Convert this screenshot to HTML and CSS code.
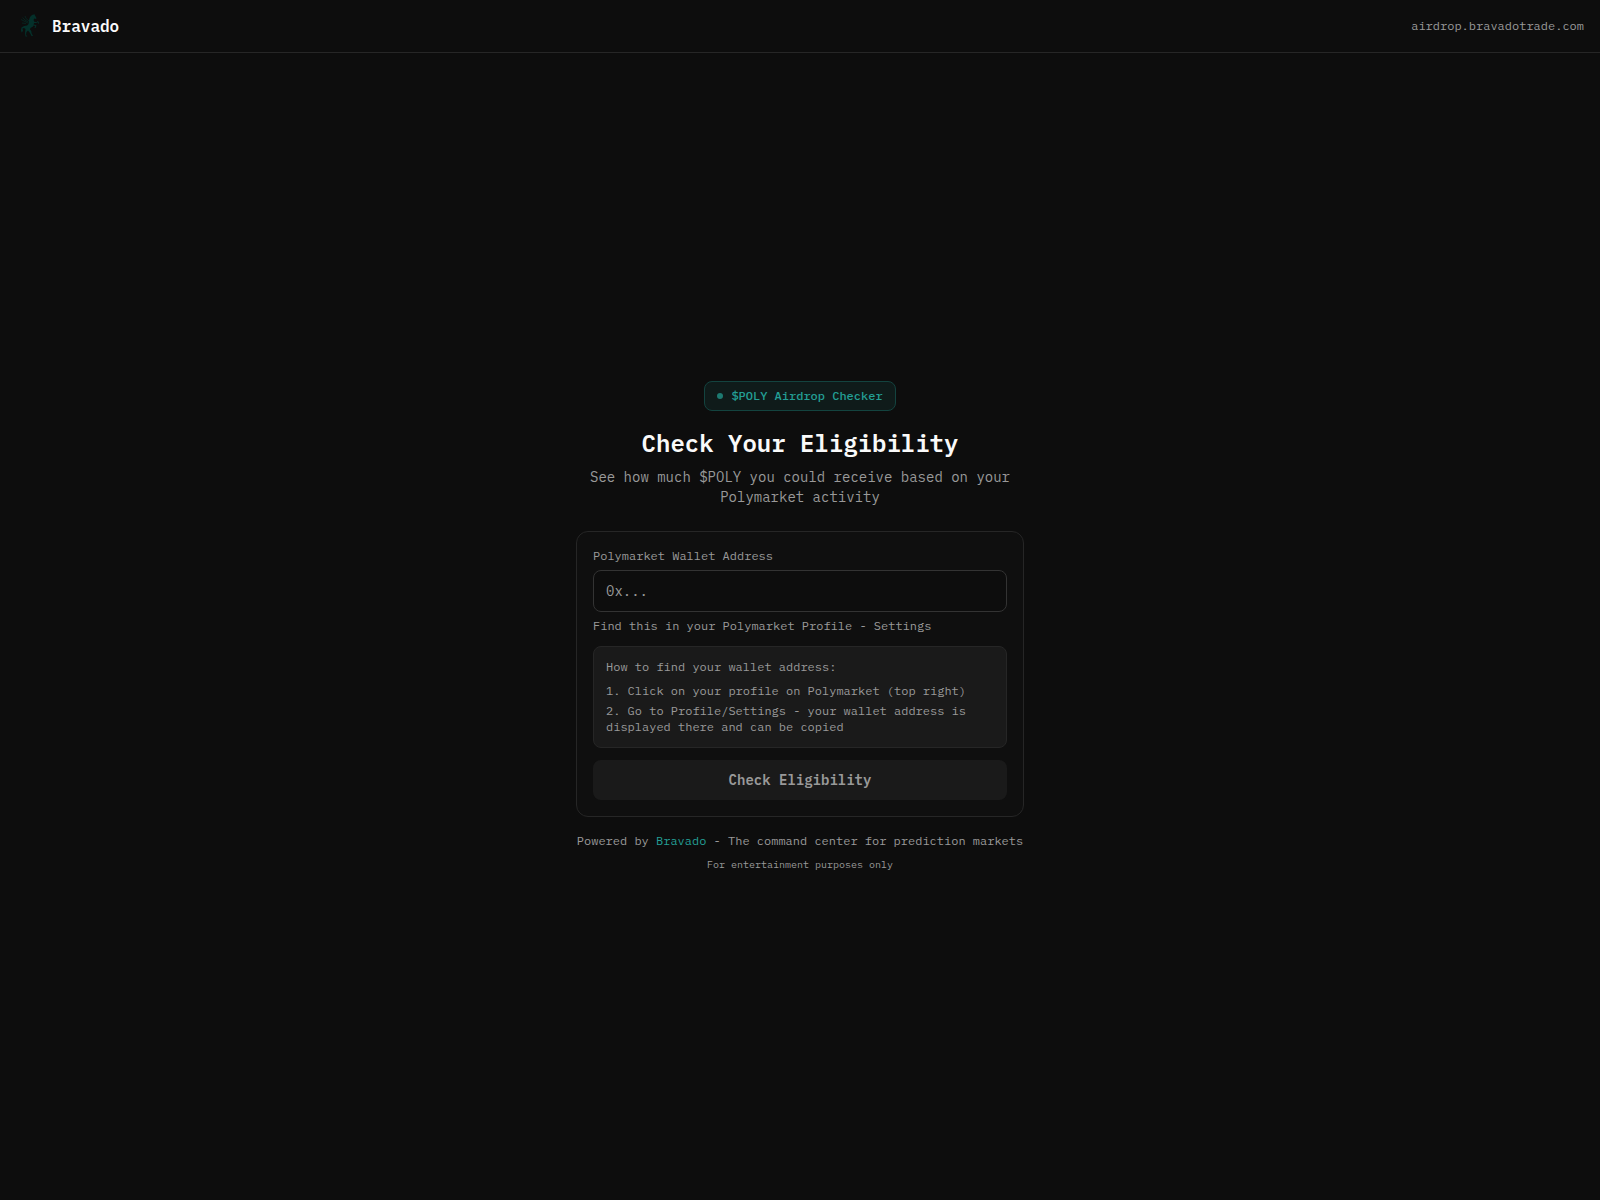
FILE: index.html
```html
<!DOCTYPE html>
<html lang="en">
<head>
    <meta charset="UTF-8">
    <meta name="viewport" content="width=device-width, initial-scale=1.0">
    <title>$POLY Airdrop Checker</title>
    <link rel="stylesheet" href="styles.css">
</head>
<body>
    <header class="header">
        <div class="brand">
            <svg class="logo" viewBox="0 0 28 28" aria-hidden="true">
                <path class="horse" d="M14 5 L16 3 L18.500 2.300 L19 3.500 L20.500 6 L20 7 L18.300 6.500 L17.500 8 L18.500 10 L17.500 13 L17 14.500 L14.500 16 L14 17.500 L15.300 19 L15.500 21 L17 24 L15.500 24 L14 21 L12 18.500 L10.500 20 L10 23 L11.500 24.500 L9.500 24.500 L9 21 L9.500 17 L8 16 L6.500 16.500 L7 19 L5.500 20.500 L5 18 L5.500 15.500 L8 14 L11 13.500 L12.500 12 L13 8 Z"/>
                <path class="leg" d="M17.500 10.500 L20.500 10.500 L22 9.500 L22.500 11.500 M17 13 L20 13.500 L19 16"/>
                <path class="wing" d="M5 7.500 L8 9 L12 11 M6.500 5.500 L9 8 L12 10 M9 4 L10 6.500 L13 9 M6 11 L10 11.500"/>
            </svg>
            <span class="brand-name">Bravado</span>
        </div>
        <span class="domain">airdrop.bravadotrade.com</span>
    </header>

    <main class="main">
        <div class="content">
            <div class="intro">
                <div class="pill"><span class="dot"></span>$POLY Airdrop Checker</div>
                <h1>Check Your Eligibility</h1>
                <p class="subtitle">See how much $POLY you could receive based on your Polymarket activity</p>
            </div>

            <form class="card">
                <div class="field">
                    <label for="wallet">Polymarket Wallet Address</label>
                    <input id="wallet" type="text" placeholder="0x..." autocomplete="off">
                    <p class="hint">Find this in your Polymarket Profile - Settings</p>
                </div>
                <div class="howto">
                    <p class="howto-title">How to find your wallet address:</p>
                    <p>1. Click on your profile on Polymarket (top right)</p>
                    <p>2. Go to Profile/Settings - your wallet address is displayed there and can be copied</p>
                </div>
                <button class="check-btn" type="submit" disabled>Check Eligibility</button>
            </form>

            <footer class="footer">
                <p>Powered by <a href="#">Bravado</a> - The command center for prediction markets</p>
                <p class="disclaimer">For entertainment purposes only</p>
            </footer>
        </div>
    </main>
</body>
</html>
```

FILE: styles.css
```css
* {
    box-sizing: border-box;
    margin: 0;
    padding: 0;
}

body {
    min-height: 100vh;
    display: flex;
    flex-direction: column;
    background: #0d0d0d;
    color: #999;
    font-family: "IBM Plex Mono", "Liberation Mono", monospace;
    font-size: 12px;
    line-height: 16px;
}

/* header */
.header {
    display: flex;
    align-items: center;
    justify-content: space-between;
    padding: 12px 16px;
    border-bottom: 1px solid #262626;
}

.brand {
    display: flex;
    align-items: center;
    gap: 8px;
}

.logo {
    width: 28px;
    height: 28px;
}

.horse {
    fill: #04302a;
}

.leg,
.wing {
    fill: none;
    stroke: #04302a;
    stroke-width: 1;
}

.wing {
    stroke: #06241f;
}

.brand-name {
    color: #fafafa;
    font-size: 16px;
    font-weight: 600;
    line-height: 24px;
}

/* main */
.main {
    flex: 1;
    display: flex;
    align-items: center;
    justify-content: center;
    padding: 16px;
}

.content {
    width: 100%;
    max-width: 448px;
}

.intro {
    display: flex;
    flex-direction: column;
    align-items: center;
    margin-bottom: 24px;
    text-align: center;
}

.pill {
    display: flex;
    align-items: center;
    gap: 8px;
    margin-bottom: 16px;
    padding: 6px 12px;
    border: 1px solid #13433f;
    border-radius: 8px;
    background: #0f1b1a;
    color: #239f95;
    font-weight: 500;
}

.dot {
    width: 6px;
    height: 6px;
    border-radius: 50%;
    background: #1d7a71;
}

h1 {
    margin-bottom: 8px;
    color: #fafafa;
    font-size: 24px;
    font-weight: 600;
    line-height: 32px;
}

.subtitle {
    font-size: 14px;
    line-height: 20px;
}

/* form */
.card {
    display: flex;
    flex-direction: column;
    gap: 12px;
    padding: 16px;
    border: 1px solid #262626;
    border-radius: 12px;
    background: #0f0f0f;
}

.field {
    display: flex;
    flex-direction: column;
    gap: 6px;
}

.field input {
    width: 100%;
    padding: 10px 12px;
    border: 1px solid #333;
    border-radius: 8px;
    outline: none;
    background: #0d0d0d;
    color: #fafafa;
    font-family: inherit;
    font-size: 14px;
    line-height: 20px;
}

.field input::placeholder {
    color: #999;
}

.howto {
    display: flex;
    flex-direction: column;
    gap: 4px;
    padding: 12px;
    border: 1px solid #262626;
    border-radius: 8px;
    background: #1a1a1a;
}

.howto-title {
    margin-bottom: 4px;
}

.check-btn {
    padding: 10px 16px;
    border: none;
    border-radius: 8px;
    background: #1a1a1a;
    color: #999;
    font-family: inherit;
    font-size: 14px;
    font-weight: 600;
    line-height: 20px;
}

/* footer */
.footer {
    display: flex;
    flex-direction: column;
    gap: 8px;
    margin-top: 16px;
    text-align: center;
}

.footer a {
    color: #239f95;
    text-decoration: none;
}

.disclaimer {
    font-size: 10px;
    line-height: 15px;
}
```
